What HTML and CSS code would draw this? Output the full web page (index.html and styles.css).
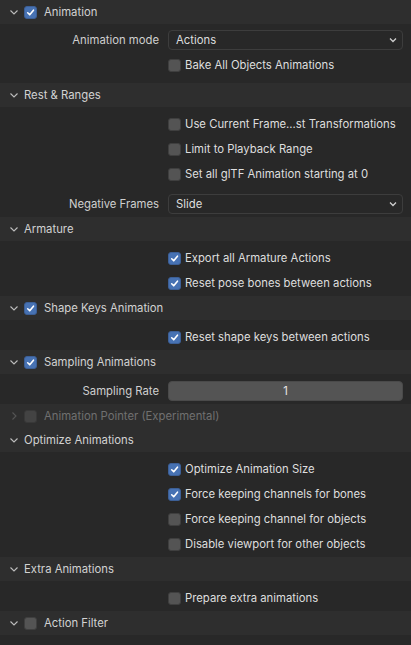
FILE: index.html
```html
<!DOCTYPE html>
<html>
<head>
<meta charset="utf-8">
<link rel="stylesheet" href="styles.css">
</head>
<body>
<div class="panel">

  <div class="hdr">
    <svg class="chev" viewBox="0 0 12 12"><path d="M2.5 4.5 L6 8 L9.5 4.5"/></svg>
    <span class="cb on"><svg viewBox="0 0 13 13"><path d="M3.2 6.8 L5.6 9.2 L10 3.8"/></svg></span>
    <span class="htxt">Animation</span>
  </div>
  <div class="body first">
    <div class="row"><div class="lbl">Animation mode</div><div class="ctl"><div class="select"><span>Actions</span><svg viewBox="0 0 10 10"><path d="M2 3.5 L5 6.5 L8 3.5"/></svg></div></div></div>
    <div class="row"><div class="lbl"></div><div class="ctl"><span class="cb"></span><span class="ctxt">Bake All Objects Animations</span></div></div>
  </div>

  <div class="hdr">
    <svg class="chev" viewBox="0 0 12 12"><path d="M2.5 4.5 L6 8 L9.5 4.5"/></svg>
    <span class="htxt">Rest &amp; Ranges</span>
  </div>
  <div class="body">
    <div class="row"><div class="lbl"></div><div class="ctl"><span class="cb"></span><span class="ctxt">Use Current Frame...st Transformations</span></div></div>
    <div class="row"><div class="lbl"></div><div class="ctl"><span class="cb"></span><span class="ctxt">Limit to Playback Range</span></div></div>
    <div class="row"><div class="lbl"></div><div class="ctl"><span class="cb"></span><span class="ctxt">Set all glTF Animation starting at 0</span></div></div>
    <div class="row sep"><div class="lbl">Negative Frames</div><div class="ctl"><div class="select"><span>Slide</span><svg viewBox="0 0 10 10"><path d="M2 3.5 L5 6.5 L8 3.5"/></svg></div></div></div>
  </div>

  <div class="hdr">
    <svg class="chev" viewBox="0 0 12 12"><path d="M2.5 4.5 L6 8 L9.5 4.5"/></svg>
    <span class="htxt">Armature</span>
  </div>
  <div class="body">
    <div class="row"><div class="lbl"></div><div class="ctl"><span class="cb on"><svg viewBox="0 0 13 13"><path d="M3.2 6.8 L5.6 9.2 L10 3.8"/></svg></span><span class="ctxt">Export all Armature Actions</span></div></div>
    <div class="row"><div class="lbl"></div><div class="ctl"><span class="cb on"><svg viewBox="0 0 13 13"><path d="M3.2 6.8 L5.6 9.2 L10 3.8"/></svg></span><span class="ctxt">Reset pose bones between actions</span></div></div>
  </div>

  <div class="hdr">
    <svg class="chev" viewBox="0 0 12 12"><path d="M2.5 4.5 L6 8 L9.5 4.5"/></svg>
    <span class="cb on"><svg viewBox="0 0 13 13"><path d="M3.2 6.8 L5.6 9.2 L10 3.8"/></svg></span>
    <span class="htxt">Shape Keys Animation</span>
  </div>
  <div class="body">
    <div class="row"><div class="lbl"></div><div class="ctl"><span class="cb on"><svg viewBox="0 0 13 13"><path d="M3.2 6.8 L5.6 9.2 L10 3.8"/></svg></span><span class="ctxt">Reset shape keys between actions</span></div></div>
  </div>

  <div class="hdr">
    <svg class="chev" viewBox="0 0 12 12"><path d="M2.5 4.5 L6 8 L9.5 4.5"/></svg>
    <span class="cb on"><svg viewBox="0 0 13 13"><path d="M3.2 6.8 L5.6 9.2 L10 3.8"/></svg></span>
    <span class="htxt">Sampling Animations</span>
  </div>
  <div class="body">
    <div class="row"><div class="lbl">Sampling Rate</div><div class="ctl"><div class="num">1</div></div></div>
  </div>

  <div class="hdr disabled">
    <svg class="chev" viewBox="0 0 12 12"><path d="M4.5 2.5 L8 6 L4.5 9.5"/></svg>
    <span class="cb"></span>
    <span class="htxt">Animation Pointer (Experimental)</span>
  </div>

  <div class="hdr">
    <svg class="chev" viewBox="0 0 12 12"><path d="M2.5 4.5 L6 8 L9.5 4.5"/></svg>
    <span class="htxt">Optimize Animations</span>
  </div>
  <div class="body">
    <div class="row"><div class="lbl"></div><div class="ctl"><span class="cb on"><svg viewBox="0 0 13 13"><path d="M3.2 6.8 L5.6 9.2 L10 3.8"/></svg></span><span class="ctxt">Optimize Animation Size</span></div></div>
    <div class="row"><div class="lbl"></div><div class="ctl"><span class="cb on"><svg viewBox="0 0 13 13"><path d="M3.2 6.8 L5.6 9.2 L10 3.8"/></svg></span><span class="ctxt">Force keeping channels for bones</span></div></div>
    <div class="row"><div class="lbl"></div><div class="ctl"><span class="cb"></span><span class="ctxt">Force keeping channel for objects</span></div></div>
    <div class="row"><div class="lbl"></div><div class="ctl"><span class="cb"></span><span class="ctxt">Disable viewport for other objects</span></div></div>
  </div>

  <div class="hdr">
    <svg class="chev" viewBox="0 0 12 12"><path d="M2.5 4.5 L6 8 L9.5 4.5"/></svg>
    <span class="htxt">Extra Animations</span>
  </div>
  <div class="body">
    <div class="row"><div class="lbl"></div><div class="ctl"><span class="cb"></span><span class="ctxt">Prepare extra animations</span></div></div>
  </div>

  <div class="hdr">
    <svg class="chev" viewBox="0 0 12 12"><path d="M2.5 4.5 L6 8 L9.5 4.5"/></svg>
    <span class="cb"></span>
    <span class="htxt">Action Filter</span>
  </div>
  <div class="tail"></div>
</div>
</body>
</html>
```
FILE: styles.css
```css
html, body {
  margin: 0;
  padding: 0;
  background: #282828;
  font-family: Inter, "Noto Sans", sans-serif;
  font-size: 11.3px;
  color: #dcdcdc;
}
.panel {
  width: 411px;
  height: 645px;
  overflow: hidden;
  display: flex;
  flex-direction: column;
}
.hdr {
  height: 24px;
  flex: none;
  background: #2e2e2e;
  display: flex;
  align-items: center;
  box-sizing: border-box;
}
.chev {
  width: 12px;
  height: 12px;
  margin-left: 8px;
  margin-right: 4px;
  fill: none;
  stroke: #bdbdbd;
  stroke-width: 1.1;
}
.hdr .cb {
  margin-right: 7px;
}
.htxt {
  color: #d2d2d2;
  font-size: 11.3px;
}
.hdr.disabled .chev { stroke: #555; }
.hdr.disabled .cb { background: #434343; border-color: #383838; }
.hdr.disabled .htxt { color: #707070; }

.body {
  background: #282828;
  padding: 7px 0 3px;
  display: flex;
  flex-direction: column;
  gap: 5px;
}
.body.first {
  padding: 6px 0 8px;
}
.row {
  height: 20px;
  display: flex;
  align-items: center;
}
.row.sep { margin-top: 5px; }
.lbl {
  width: 168px;
  box-sizing: border-box;
  padding-right: 9px;
  text-align: right;
  color: #cfcfcf;
  flex: none;
}
.ctl {
  width: 235px;
  flex: none;
  display: flex;
  align-items: center;
  height: 20px;
}
.cb {
  width: 13px;
  height: 13px;
  box-sizing: border-box;
  border-radius: 3px;
  background: #545454;
  border: 1px solid #3f3f3f;
  flex: none;
  display: inline-flex;
}
.cb.on {
  background: #4772b3;
  border-color: #3c5f96;
}
.cb svg {
  width: 11px;
  height: 11px;
  fill: none;
  stroke: #fff;
  stroke-width: 1.9;
  stroke-linecap: round;
  stroke-linejoin: round;
}
.ctxt {
  margin-left: 4px;
  color: #dedede;
  white-space: nowrap;
}
.select {
  width: 100%;
  height: 20px;
  box-sizing: border-box;
  border: 1px solid #3d3d3d;
  border-radius: 4px;
  background: #282828;
  display: flex;
  align-items: center;
  justify-content: space-between;
  padding: 0 4px 0 7px;
  color: #dedede;
}
.select svg {
  width: 10px;
  height: 10px;
  fill: none;
  stroke: #cfcfcf;
  stroke-width: 1.3;
}
.num {
  width: 100%;
  height: 20px;
  box-sizing: border-box;
  border: 1px solid #4a4a4a;
  border-radius: 4px;
  background: #545454;
  display: flex;
  align-items: center;
  justify-content: center;
  color: #e6e6e6;
}
.tail {
  flex: 1;
  background: #282828;
}
```
